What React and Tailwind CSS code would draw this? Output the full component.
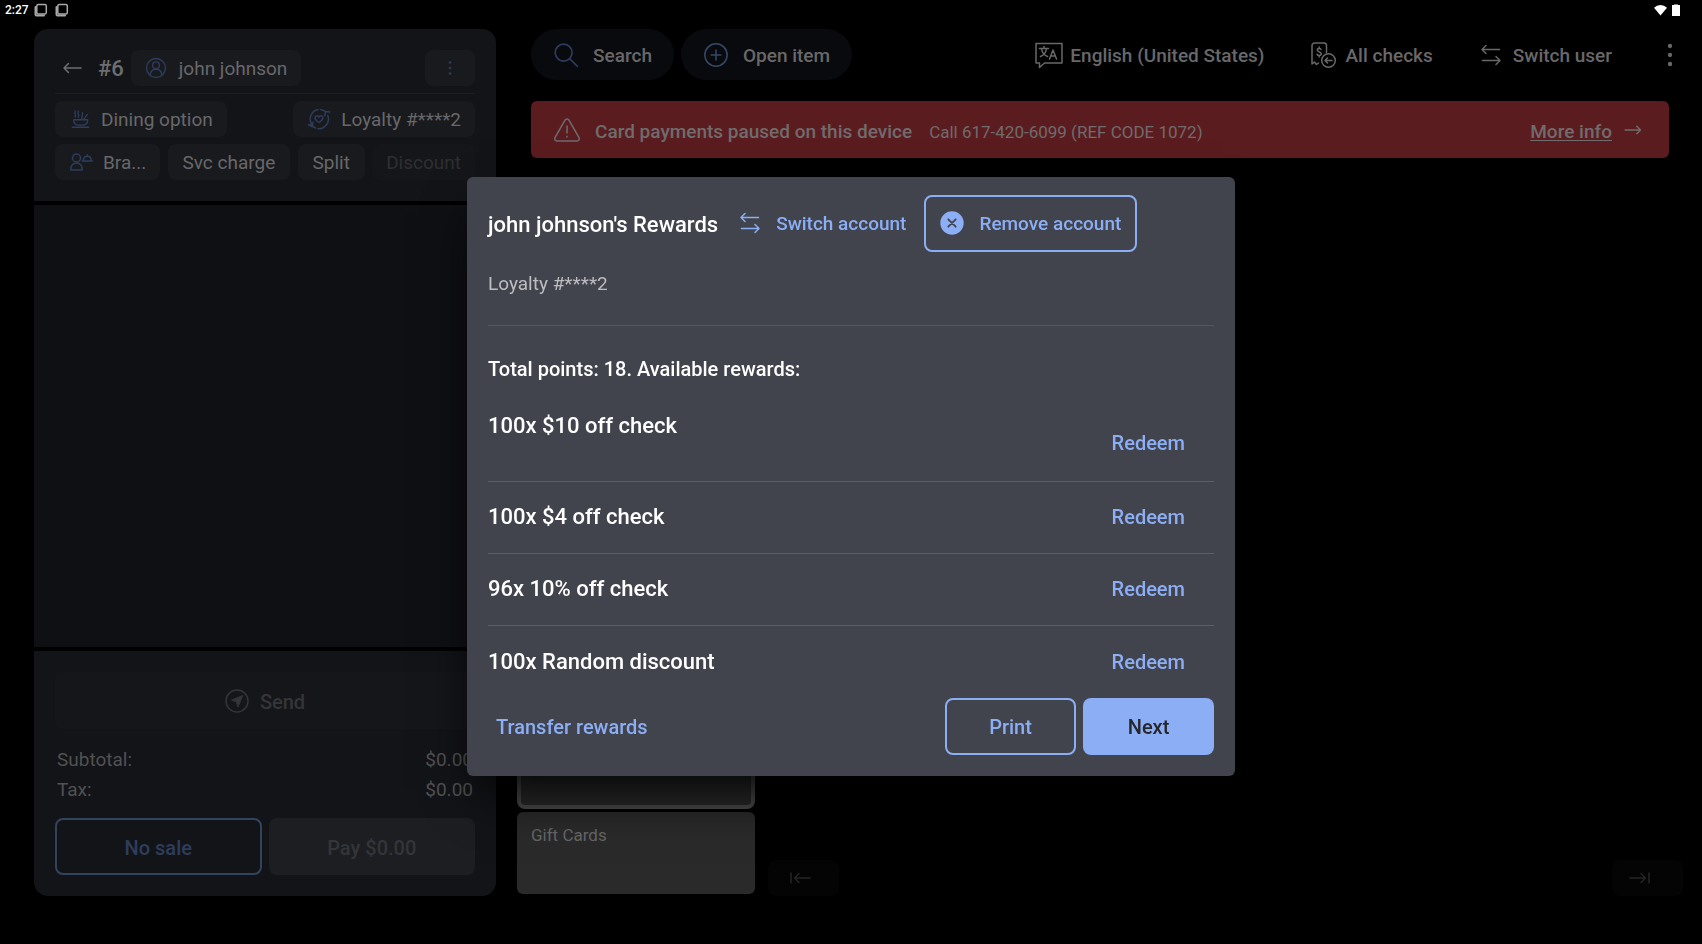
function Svg({ size = 24, vb = 24, sw = 1.5, className = "", children }) {
  return (
    <svg
      aria-hidden="true"
      width={size}
      height={size}
      viewBox={`0 0 ${vb} ${vb}`}
      fill="none"
      stroke="currentColor"
      strokeWidth={sw}
      strokeLinecap="round"
      strokeLinejoin="round"
      className={`shrink-0 ${className}`}
    >
      {children}
    </svg>
  );
}

const BackArrow = () => (
  <Svg>
    <path d="M21 12H4M8.500 7.500 4 12l4.500 4.500" />
  </Svg>
);
const UserCircle = () => (
  <Svg size={22}>
    <circle cx="12" cy="12" r="10.300" />
    <circle cx="12" cy="9" r="3.700" />
    <path d="M5.500 19.300c.6-3.800 3-6 6.500-6s5.900 2.200 6.500 6" />
  </Svg>
);
const DotsVertical = ({ size = 24, r = 1.2, gap = 6 }) => (
  <Svg size={size} sw={0}>
    <g fill="currentColor">
      <circle cx="12" cy={12 - gap} r={r} />
      <circle cx="12" cy="12" r={r} />
      <circle cx="12" cy={12 + gap} r={r} />
    </g>
  </Svg>
);
const Bowl = () => (
  <Svg size={22} sw={1.4}>
    <path d="M3.500 21h18M5 12.800h15.500c0 3-1.800 5-4 5.900h-7.500c-2.200-.9-4-2.900-4-5.900z" />
    <path d="M6.500 3.300c1.200 1-1 2 .2 3.400s-.8 1.900.3 3.300M10 3.300c1.200 1-1 2 .2 3.400s-.8 1.900.3 3.300M14 12l.8-7M16.500 12l3.500-5" />
  </Svg>
);
const Loyalty = () => (
  <Svg size={24}>
    <path d="M4.600 17A9.700 9.700 0 0 1 11 2.500M13.500 2.500a9.700 9.700 0 0 1 4.800 2.200M20.800 8.500A9.700 9.700 0 0 1 11 21.700M8.500 21a9.700 9.700 0 0 1-4.500-4M17.800 8.500l.8-4 4.200.4M6 15.300l-1 4.200-3.600-1.700" />
    <path d="M12 15.500c-2.200-1.500-4-2.800-4-4.700C8 8.600 10.800 8.100 12 10c1.200-1.900 4-1.400 4 .8 0 1.900-1.800 3.200-4 4.700z" />
  </Svg>
);
const ServerIcon = () => (
  <Svg size={24}>
    <circle cx="7.500" cy="8" r="4" />
    <path d="M1.800 20c0-4.500 2-7 5.700-7s5.700 2.500 5.700 7zM13.300 11h10M14.200 10.800c.3-3 1.900-4.500 4.100-4.500s3.900 1.500 4.200 4.500M18.300 6.300V5" />
  </Svg>
);
const SearchIcon = () => (
  <Svg size={26}>
    <circle cx="9.800" cy="9.800" r="7.800" />
    <path d="m15.500 15.500 7 7" />
  </Svg>
);
const PlusCircle = () => (
  <Svg size={26} sw={1.4}>
    <circle cx="12" cy="12" r="10.300" />
    <path d="M12 7.500v9M7.500 12h9" />
  </Svg>
);
const Translate = () => (
  <Svg size={28} vb={28}>
    <path d="M1 2.500h26v19.500H9.500l-5 4.500V22H1z" />
    <path d="M4.500 7.500h9M9 5.500v2M6.500 7.500c.5 3.500 3 7 6 8M11.500 7.500c-.5 3.500-3 7-6 8M14.500 18l3.500-9 3.500 9M15.800 15h4.500" />
  </Svg>
);
const Checks = () => (
  <Svg size={28} vb={28}>
    <path d="M17.500 11.500V4.500A2.500 2.500 0 0 0 15 2H5.500A2.500 2.500 0 0 0 3 4.500V23l2.500-2 2 2.500L9.500 22" />
    <circle cx="19.500" cy="19.500" r="6.800" />
    <path d="M23 19.500h-7M18.500 17 16 19.500l2.500 2.500" />
    <path d="M12 8.500c-.4-.8-1-1-1.800-1-1.100 0-1.900.6-1.900 1.600 0 2.400 4 1.400 4 3.700 0 1-.9 1.700-2.100 1.700-1 0-1.700-.4-2.100-1.200M10.200 6v1.500M10.200 14.500V16" />
  </Svg>
);
const SwitchArrows = () => (
  <Svg size={24}>
    <path d="M20.500 6.500h-17M7 2.500l-4 4 4 4M3.500 17.500h17M17 13.500l4 4-4 4" />
  </Svg>
);
const Warning = () => (
  <Svg size={28} vb={28}>
    <path d="M12 4.200a2.300 2.300 0 0 1 4 0l10 17.500a2.200 2.200 0 0 1-2 3.300H4a2.200 2.200 0 0 1-2-3.300zM14 10v7M14 20.300v.7" />
  </Svg>
);
const RightArrow = () => (
  <Svg size={20} sw={1.8}>
    <path d="M2.500 12h18M16.500 7.500 21 12l-4.500 4.500" />
  </Svg>
);
const CloseFilled = () => (
  <Svg size={24} sw={0}>
    <circle cx="12" cy="12" r="11.700" fill="currentColor" />
    <path d="m8.300 8.300 7.400 7.400M15.700 8.300l-7.400 7.400" stroke="#42444d" strokeWidth="1.800" />
  </Svg>
);
const SendIcon = () => (
  <Svg size={24}>
    <circle cx="12" cy="12" r="11" />
    <path d="M17.300 6.700 6.500 11.200l4.800 1.500 1.600 5z" fill="currentColor" strokeWidth="1" />
  </Svg>
);
const FirstPage = () => (
  <Svg size={24}>
    <path d="M3 7v10M22 12H7M11 7.500 6.500 12l4.500 4.500" />
  </Svg>
);
const LastPage = () => (
  <Svg size={24}>
    <path d="M21 7v10M2 12h15M13 7.500l4.500 4.500-4.500 4.500" />
  </Svg>
);
const Squares = () => (
  <Svg size={14} vb={14} sw={1.5}>
    <path d="M1.500 4v7.500a1 1 0 0 0 1 1H10" strokeWidth="2" />
    <rect x="2.800" y="1.500" width="9.500" height="9.500" rx="1.500" />
  </Svg>
);

// Button captions sit a pixel below the centre line of their icons.
const Label = ({ children }) => <span className="pt-0.5">{children}</span>;

function StatusBar() {
  return (
    <div className="flex h-5 items-center justify-between pr-[22px] pl-[5px]">
      <div className="flex items-center text-[#a8a8a8]">
        <span className="mr-[5px] text-xs font-medium text-white">2:27</span>
        <span className="flex gap-[7px]">
          <Squares />
          <Squares />
        </span>
      </div>
      <div className="flex items-center gap-[5px] text-white">
        <svg aria-hidden="true" width="13" height="12" viewBox="0 0 14 12">
          <path d="M7 12 0 3.500Q3 .5 7 .5t7 3z" fill="currentColor" />
        </svg>
        <svg aria-hidden="true" width="8" height="12" viewBox="0 0 8 12">
          <path d="M2 .5h4V1h2v11H0V1h2z" fill="currentColor" />
        </svg>
      </div>
    </div>
  );
}

function Chip({ icon, children, className = "" }) {
  return (
    <button
      type="button"
      className={`flex h-9 items-center rounded-lg bg-[#191a1e] whitespace-nowrap text-[#68686a] ${className}`}
    >
      {icon && <span className="text-[#2e3d5c]">{icon}</span>}
      <Label>{children}</Label>
    </button>
  );
}

function CheckPanel() {
  return (
    <section aria-label="Check" className="flex w-[462px] shrink-0 flex-col gap-1 text-[19px] leading-7">
      <div className="rounded-t-[14px] bg-[#131418] p-[21px]">
        <div className="flex items-center border-b border-[#1d1e22] pb-[7px]">
          <button type="button" aria-label="Back" className="ml-[5px] text-[#6e6e70]">
            <BackArrow />
          </button>
          <h1 className="ml-[14px] pt-0.5 text-[22px] font-medium text-[#6e6e70]">#6</h1>
          <Chip icon={<UserCircle />} className="ml-[7px] gap-[12px] px-[14px]">
            john johnson
          </Chip>
          <button
            type="button"
            aria-label="Check options"
            className="ml-auto flex h-9 w-[50px] items-center justify-center rounded-lg bg-[#191a1e] text-[#2e3d5c]"
          >
            <DotsVertical size={22} r={1.4} />
          </button>
        </div>
        <div className="flex justify-between pt-[7px]">
          <Chip icon={<Bowl />} className="gap-[10px] px-[14px]">Dining option</Chip>
          <Chip icon={<Loyalty />} className="gap-[10px] px-[14px]">Loyalty #****2</Chip>
        </div>
        <div className="flex justify-between pt-[7px]">
          <Chip icon={<ServerIcon />} className="gap-[10px] px-[14px]">Bra...</Chip>
          <Chip className="px-[15px]">Svc charge</Chip>
          <Chip className="px-[15px]">Split</Chip>
          <button type="button" disabled className="h-9 rounded-lg bg-[#15161a] px-[14px] pt-0.5 text-[#2e2f32]">
            Discount
          </button>
        </div>
      </div>

      <div className="flex-1 bg-[#0f1014]" />

      <div className="rounded-b-[14px] bg-[#131418] p-[21px]">
        <button
          type="button"
          disabled
          className="flex h-[57px] w-full items-center justify-center gap-[11px] rounded-lg bg-[#15161a] text-xl font-medium text-[#343538]"
        >
          <SendIcon />
          <Label>Send</Label>
        </button>
        <dl className="px-[2px] pt-[16px] text-[#505153]">
          <div className="flex h-[30px] items-center justify-between">
            <dt>Subtotal:</dt>
            <dd>$0.00</dd>
          </div>
          <div className="flex h-[30px] items-center justify-between">
            <dt>Tax:</dt>
            <dd>$0.00</dd>
          </div>
        </dl>
        <div className="grid grid-cols-2 gap-[7px] pt-[13px] text-xl font-medium">
          <button type="button" className="h-[57px] rounded-lg border-2 border-[#33435f] pt-0.5 text-[#2e3d5c]">
            No sale
          </button>
          <button type="button" disabled className="h-[57px] rounded-lg bg-[#1d1e22] pt-0.5 text-[#343538]">
            Pay $0.00
          </button>
        </div>
      </div>
    </section>
  );
}

function TopBar() {
  return (
    <header className="flex items-center pl-[14px] text-[19px] leading-7 font-medium text-[#68686a]">
      <button type="button" className="flex h-[51px] items-center gap-[14px] rounded-full bg-[#090a0d] px-[22px]">
        <span className="text-[#2e3d5c]"><SearchIcon /></span>
        <Label>Search</Label>
      </button>
      <button type="button" className="ml-[7px] flex h-[51px] items-center gap-[14px] rounded-full bg-[#090a0d] px-[22px]">
        <span className="text-[#364766]"><PlusCircle /></span>
        <Label>Open item</Label>
      </button>
      <button type="button" className="ml-auto flex items-center gap-[7px]">
        <Translate />
        <Label>English (United States)</Label>
      </button>
      <button type="button" className="ml-[44px] flex items-center gap-[9px]">
        <Checks />
        <Label>All checks</Label>
      </button>
      <button type="button" className="ml-[46px] flex items-center gap-[10px]">
        <SwitchArrows />
        <Label>Switch user</Label>
      </button>
      <button type="button" aria-label="More" className="ml-[45px]">
        <DotsVertical size={26} r={2} gap={8.3} />
      </button>
    </header>
  );
}

function Banner() {
  return (
    <div
      role="alert"
      className="mx-[14px] mt-[21px] flex h-[57px] items-center rounded-md bg-[#5b1c20] pr-[26px] pl-[22px] text-[19px] leading-7 text-[#706b6c]"
    >
      <Warning />
      <p className="ml-[14px] pt-1 font-medium">Card payments paused on this device</p>
      <p className="ml-[17px] pt-1 text-[17px]">Call 617-420-6099 (REF CODE 1072)</p>
      <a href="#more-info" className="ml-auto flex items-center gap-[11px] font-medium">
        <span className="pt-1 underline underline-offset-2">More info</span>
        <RightArrow />
      </a>
    </div>
  );
}

function MenuArea() {
  return (
    <main className="mt-auto flex items-end justify-between">
      <div className="flex items-end gap-[13px]">
        <div className="flex w-[238px] flex-col gap-[3px] text-[17px] text-[#666]">
          <button
            type="button"
            aria-label="Selected menu group"
            className="h-[83px] rounded-lg border-4 border-[#4a4a4a] bg-[#2a2a2a]"
          />
          <button type="button" className="mb-[2px] flex h-[82px] items-start rounded-md bg-[#2a2a2a] px-[14px] pt-[11px]">
            Gift Cards
          </button>
        </div>
        <button
          type="button"
          disabled
          aria-label="First page"
          className="flex h-9 w-[71px] items-center rounded-lg bg-[#040404] pl-5 text-[#242424]"
        >
          <FirstPage />
        </button>
      </div>
      <button
        type="button"
        disabled
        aria-label="Last page"
        className="flex h-9 w-[71px] items-center rounded-lg bg-[#040404] pl-4 text-[#242424]"
      >
        <LastPage />
      </button>
    </main>
  );
}

const rewards = ["100x $10 off check", "100x $4 off check", "96x 10% off check", "100x Random discount"];

function RewardsDialog() {
  return (
    <div className="fixed inset-0 flex items-center justify-center">
      <div
        role="dialog"
        aria-modal="true"
        aria-labelledby="rewards-title"
        className="mt-2 w-[768px] rounded-md bg-[#42444d] px-[21px] pt-[18px] pb-[21px] text-[19px] leading-7 text-white shadow-2xl shadow-black"
      >
        <div className="flex items-center">
          <h2 id="rewards-title" className="pt-1 text-[22px] font-medium">john johnson's Rewards</h2>
          <button type="button" className="ml-[20px] flex items-center gap-[14px] font-medium text-[#8caef4]">
            <SwitchArrows />
            <Label>Switch account</Label>
          </button>
          <button
            type="button"
            className="ml-[18px] flex h-[57px] items-center gap-[15px] rounded-lg border-2 border-[#8caef4] px-[14px] font-medium text-[#8caef4]"
          >
            <CloseFilled />
            <Label>Remove account</Label>
          </button>
        </div>
        <p className="border-b border-[#53555f] pt-[18px] pb-[27px] text-[#bdbdc0]">Loyalty #****2</p>
        <h3 className="pt-[29px] text-xl font-medium">Total points: 18. Available rewards:</h3>
        <ul className="divide-y divide-[#5c5e67] pt-[26px] text-xl font-medium">
          {rewards.map((reward, i) => (
            <li key={reward} className={i === 0 ? "flex items-start justify-between pb-6" : "flex h-[72px] items-center justify-between"}>
              <span className="text-[22px] leading-[34px]">{reward}</span>
              <button type="button" className={i === 0 ? "mr-[29px] pt-[20px] text-[#8caef4]" : "mr-[29px] text-[#8caef4]"}>
                Redeem
              </button>
            </li>
          ))}
        </ul>
        <div className="flex items-center gap-[7px] text-xl font-medium text-[#8caef4]">
          <button type="button" className="mr-auto pt-0.5 pl-2">Transfer rewards</button>
          <button type="button" className="h-[57px] w-[131px] rounded-lg border-2 border-[#8caef4] pt-0.5">Print</button>
          <button type="button" className="h-[57px] w-[131px] rounded-lg bg-[#8caef4] pt-0.5 text-[#26272b]">Next</button>
        </div>
      </div>
    </div>
  );
}

export default function App() {
  return (
    <div className="flex min-h-screen flex-col bg-black font-['Roboto',sans-serif]">
      <StatusBar />
      <div className="flex flex-1 pt-[9px] pr-[19px] pb-12 pl-[34px]">
        <CheckPanel />
        <div className="ml-[21px] flex min-w-0 flex-1 flex-col">
          <TopBar />
          <Banner />
          <MenuArea />
        </div>
      </div>
      <RewardsDialog />
    </div>
  );
}
